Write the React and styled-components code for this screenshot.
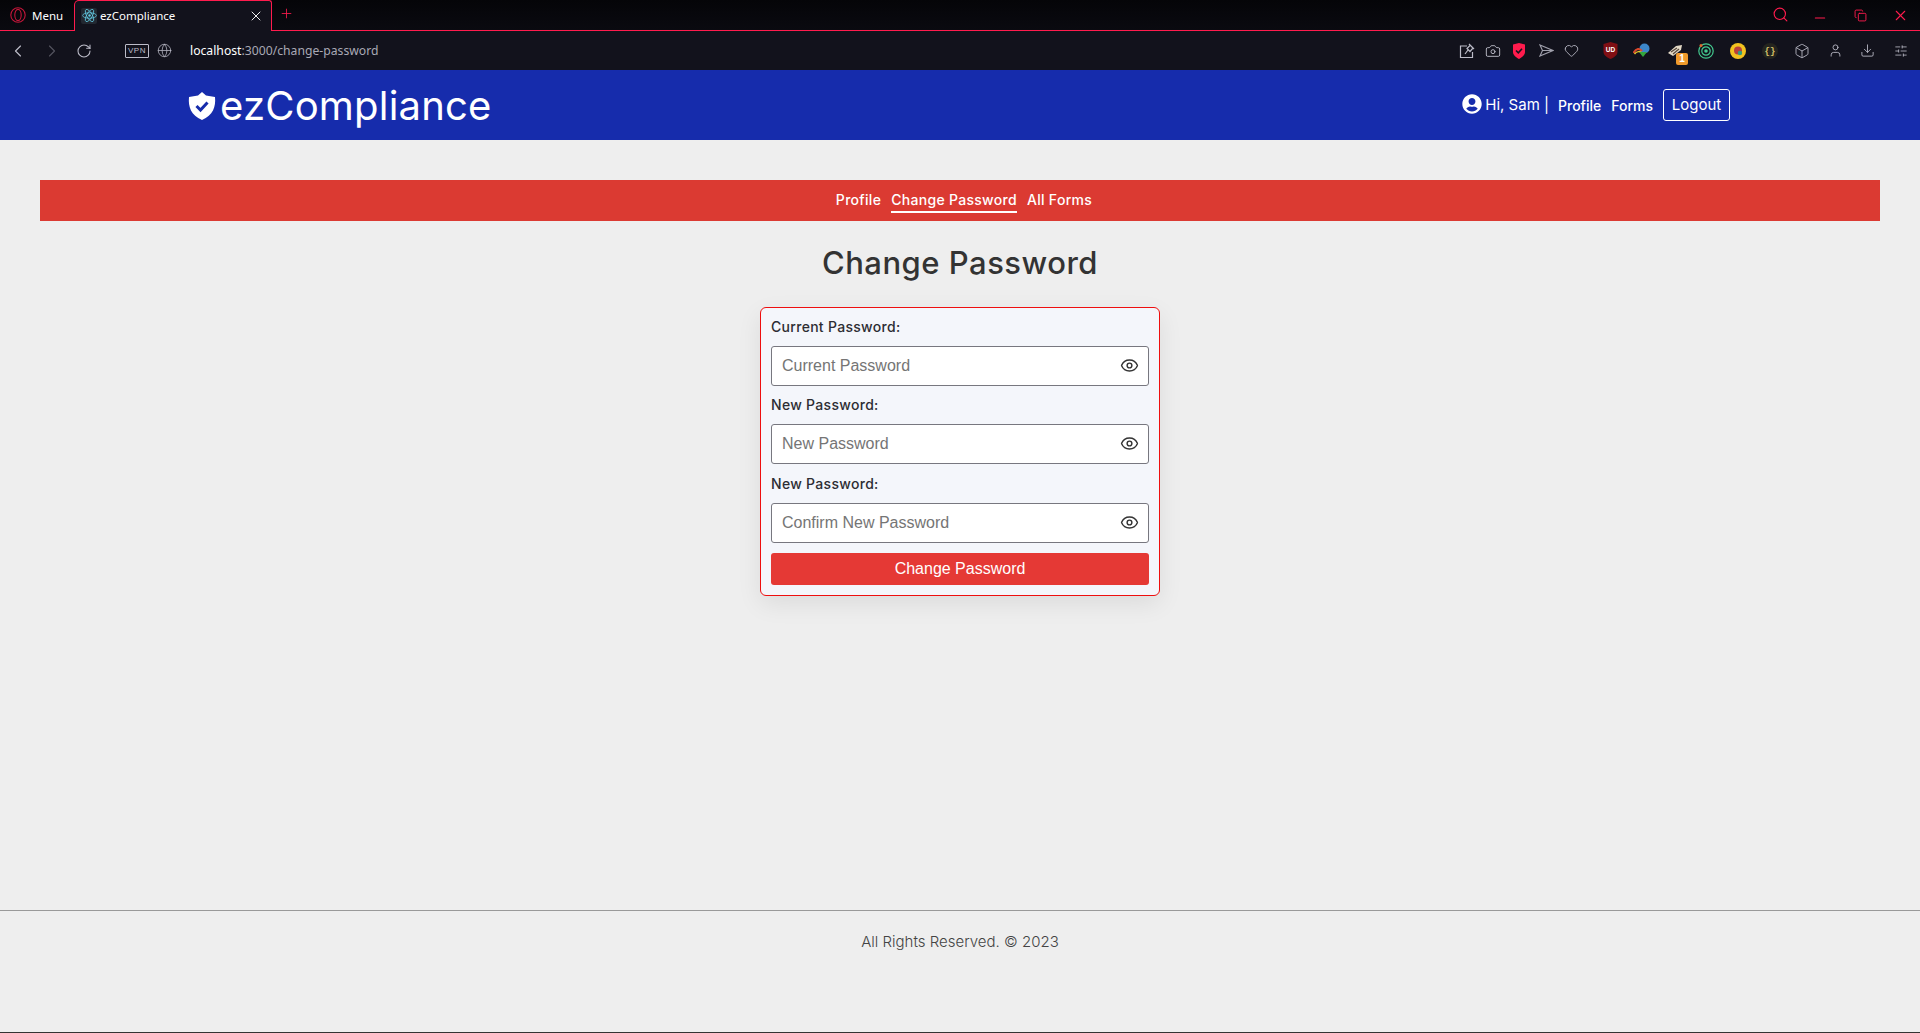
import React from "react";
import styled, { createGlobalStyle } from "styled-components";
import { ChevronLeft, ChevronRight, RotateCw, Globe, Camera, Heart, Box, User, Download, SlidersHorizontal, Search, X, Plus, Eye, Copy, Minus } from "lucide-react";
import { FaUserCircle } from "react-icons/fa";

const poppins = `Inter, "Noto Sans", sans-serif`;
const red = "#ff1b4d";

const GlobalStyle = createGlobalStyle`
  html, body { margin: 0; padding: 0; background: #eeeeee; }
  * { box-sizing: border-box; }
`;

const Page = styled.div`
  height: 1033px;
  display: flex;
  flex-direction: column;
  overflow: hidden;
  background: #eeeeee;
`;

// browser chrome
const TabStrip = styled.div`
  height: 31px;
  flex: none;
  display: flex;
  background: linear-gradient(#050508, #0a0a10);
  border-bottom: 1px solid ${red};
  font-family: "Noto Sans", sans-serif;
  font-size: 11.5px;
`;
const MenuButton = styled.div`
  width: 74px;
  display: flex;
  align-items: center;
  gap: 6px;
  padding-left: 10px;
  color: #fff;
`;
const Tab = styled.div`
  width: 198px;
  height: 31px;
  display: flex;
  align-items: center;
  padding: 0 0 1px 6px;
  color: #fff;
  background: #12121c;
  border: 1px solid ${red};
  border-bottom: none;
  border-radius: 5px 3px 0 0;
`;
const TabIcon = styled.span`
  width: 16px;
  height: 16px;
  margin-right: 3px;
  display: flex;
  align-items: center;
  justify-content: center;
  border-radius: 2px;
  background: #222831;
`;
const TabClose = styled.span`
  margin-left: auto;
  margin-right: 7px;
  display: flex;
  color: #f0f0f0;
`;
const NewTab = styled.span`
  margin: -4px 0 0 7px;
  display: flex;
  align-items: center;
  color: ${red};
`;
const WindowControls = styled.div`
  margin-left: auto;
  display: flex;
  align-items: center;
  padding-right: 10px;
  color: ${red};
`;
const WindowButton = styled.span`
  width: 20px;
  margin-left: ${p => p.$gap}px;
  display: flex;
  justify-content: center;
  margin-top: ${p => p.$down || 0}px;
`;
const Toolbar = styled.div`
  height: 39px;
  flex: none;
  display: flex;
  align-items: center;
  background: #12121c;
  color: #bcbcc8;
  padding-right: 9px;
`;
const NavIcon = styled.span`
  width: 20px;
  margin-left: ${p => p.$gap}px;
  display: flex;
  justify-content: center;
  color: ${p => p.$dim ? "#53535e" : "#bcbcc8"};
`;
const VpnTag = styled.span`
  margin-left: 31px;
  width: 24px;
  height: 14px;
  border: 1px solid #bcbcc8;
  border-radius: 1px;
  font: 8px/12px "Liberation Sans", sans-serif;
  letter-spacing: 0.6px;
  text-align: center;
`;
const AddressBar = styled.div`
  margin: -1px 0 0 16px;
  font: 12.2px "Noto Sans", sans-serif;
  color: #a9a9b5;
`;
const Host = styled.span`
  color: #fff;
`;
const ToolIcons = styled.div`
  margin-left: auto;
  display: flex;
  align-items: center;
`;
const ToolIcon = styled.span`
  position: relative;
  width: 20px;
  height: 20px;
  margin-left: ${p => p.$gap || 0}px;
  display: flex;
  align-items: center;
  justify-content: center;
`;
const Badge = styled.span`
  position: absolute;
  right: -1px;
  bottom: -4px;
  width: 12px;
  height: 12px;
  border-radius: 2px;
  background: #f09a2b;
  color: #fff;
  font: bold 10px/12px "Liberation Sans", sans-serif;
  text-align: center;
`;

// site header
const Navbar = styled.header`
  height: 70px;
  flex: none;
  display: flex;
  align-items: center;
  justify-content: space-between;
  padding: 0 190px 0 187px;
  background: #162cac;
  color: #fff;
  font-family: ${poppins};
`;
const Brand = styled.div`
  display: flex;
  align-items: center;
  gap: 3px;
  font-size: 40px;
  letter-spacing: 0.2px;
  line-height: 1;
  padding-top: 1px;
`;
const NavRight = styled.nav`
  display: flex;
  align-items: center;
`;
const Greeting = styled.span`
  display: flex;
  align-items: center;
  gap: 3px;
  font-size: 15px;
  margin: -2px 9px 0 0;
`;
const NavLink = styled.a`
  font-size: 14px;
  font-weight: 450;
  margin-right: 10px;
  margin-top: 1px;
`;
const LogoutButton = styled.button`
  width: 67px;
  height: 32px;
  padding: 0 0 2px;
  background: transparent;
  border: 1px solid #fff;
  border-radius: 3px;
  color: #fff;
  font: 15px ${poppins};
`;

// page content
const Main = styled.main`
  flex: 1;
  display: flex;
  flex-direction: column;
  align-items: center;
  padding: 40px 40px 0;
`;
const SubNav = styled.div`
  width: 100%;
  height: 41px;
  display: flex;
  justify-content: center;
  gap: 10px;
  padding-left: 8px;
  background: #db3a32;
  font: 450 14px ${poppins};
  letter-spacing: 0.3px;
  color: #fff;
`;
const SubLink = styled.a`
  height: 26px;
  margin-top: 7px;
  line-height: 26px;
  border-bottom: 2px solid ${p => p.$active ? "#fff" : "transparent"};
`;
const Title = styled.h1`
  margin: 23px 0 25px;
  font: 500 31px/38px ${poppins};
  color: #333;
  letter-spacing: 0.5px;
`;
const Card = styled.form`
  width: 400px;
  height: 289px;
  padding: 0 10px;
  background: #f4f6fb;
  border: 1px solid #ee0f0f;
  border-radius: 6px;
  box-shadow: 0 8px 24px rgba(0, 0, 0, 0.08);
`;
const Field = styled.div`
  height: 78.4px;
`;
const Label = styled.label`
  display: block;
  height: 38px;
  font: 450 14px/38px ${poppins};
  letter-spacing: 0.3px;
  color: #2d2d33;
`;
const InputWrap = styled.div`
  position: relative;
  height: 40px;
`;
const Input = styled.input`
  width: 100%;
  height: 100%;
  padding: 0 40px 0 10px;
  background: #fff;
  border: 1px solid #77777f;
  border-radius: 3px;
  font: 16px "Liberation Sans", Arial, sans-serif;
  outline: none;
  &::placeholder { color: #757575; opacity: 1; }
`;
const EyeButton = styled.span`
  position: absolute;
  right: 10px;
  top: 10px;
  display: flex;
  color: #333;
`;
const SubmitButton = styled.button`
  width: 100%;
  height: 32px;
  margin-top: 10px;
  background: #e53935;
  border: none;
  border-radius: 3px;
  color: #fff;
  font: 16px "Liberation Sans", Arial, sans-serif;
`;
const Footer = styled.footer`
  height: 123px;
  flex: none;
  padding-top: 21px;
  border-top: 1px solid #999;
  border-bottom: 1px solid #333;
  text-align: center;
  font: 300 15px/20px ${poppins};
  color: #444;
`;

const OperaLogo = () => (
  <svg width="16" height="16" viewBox="0 0 16 16" fill="none" stroke="#c4163a">
    <circle cx="8" cy="8" r="7.2" strokeWidth="1.1" />
    <ellipse cx="8" cy="8" rx="3.2" ry="5.6" strokeWidth="1.1" />
  </svg>
);

const ReactLogo = () => (
  <svg width="15" height="15" viewBox="-12 -12 24 24" fill="none" stroke="#61c8e0" strokeWidth="1.3">
    <circle r="2" fill="#61c8e0" stroke="none" />
    <ellipse rx="11" ry="4.4" />
    <ellipse rx="11" ry="4.4" transform="rotate(60)" />
    <ellipse rx="11" ry="4.4" transform="rotate(120)" />
  </svg>
);

const ShieldCheck = () => (
  <svg width="30" height="30" viewBox="0 0 30 30">
    <path d="M15 1 L19 4.5 L28 6 C29 16 26 24 15 29 C4 24 1 16 2 6 L11 4.5 Z" fill="#fff" />
    <path d="M9.5 15 L13.5 19 L20.5 11.5" fill="none" stroke="#162cac" strokeWidth="3" />
  </svg>
);

const ShareIcon = () => (
  <svg width="16" height="16" viewBox="0 0 16 16" fill="none" stroke="#bcbcc8" strokeWidth="1.2">
    <path d="M8 3H1.5V14.5H13.5V9" />
    <path d="M10 1 L15 6 M11.5 2 L8 5.5 L11 8.5 L14 5 M6 11 L9 7" />
  </svg>
);
const ShieldBadge = () => (
  <svg width="14" height="16" viewBox="0 0 14 16">
    <path d="M1 1.5 L7 0 L13 1.5 V9 C13 12.5 9.5 14.5 7 16 C4.5 14.5 1 12.5 1 9 Z" fill={red} />
    <path d="M4 7.5 L6.3 9.8 L10 5.8" fill="none" stroke="#12121c" strokeWidth="1.6" />
  </svg>
);
const SendIcon = () => (
  <svg width="15" height="13" viewBox="0 0 15 13" fill="none" stroke="#a0a0ac" strokeWidth="1.1">
    <path d="M1 1 L14 6.5 L1 12 L3.5 6.5 Z M3.5 6.5 H14" />
  </svg>
);
const UblockIcon = () => (
  <svg width="15" height="17" viewBox="0 0 15 17">
    <path d="M0.5 2 L7.5 0 L14.5 2 V10 C14.5 13 11 15.5 7.5 17 C4 15.5 0.5 13 0.5 10 Z" fill="#800f14" />
    <text x="7.5" y="10" textAnchor="middle" fontSize="6.5" fontWeight="700" fontFamily="Liberation Sans" fill="#fff">UD</text>
  </svg>
);
const IdmIcon = () => (
  <svg width="18" height="15" viewBox="0 0 18 15">
    <circle cx="11.5" cy="5.5" r="5" fill="#3c86c9" />
    <path d="M0.5 10 C3 5 7 5 9 8" fill="none" stroke="#d9482c" strokeWidth="2" />
    <path d="M1.5 11 C4 8 7 8 9 10" fill="none" stroke="#e6c12c" strokeWidth="1.5" />
    <path d="M6 9 H14 L10 14 Z" fill="#35a63c" />
  </svg>
);
const ScraperIcon = () => (
  <svg width="16" height="13" viewBox="0 0 16 13" style={{ marginLeft: -5 }}>
    <path d="M1 9 L9 2 L15 1 L14 6 L6 12 Z" fill="#e2d8c5" />
    <path d="M4 8 L10 4 M6 10 L12 5" stroke="#55463a" strokeWidth="1.2" />
  </svg>
);
const RadarIcon = () => (
  <svg width="16" height="16" viewBox="0 0 16 16" fill="none" stroke="#43c98f">
    <circle cx="8" cy="8" r="7.2" strokeWidth="1.2" />
    <circle cx="8" cy="8" r="4.2" strokeWidth="1.2" />
    <circle cx="8" cy="8" r="1.8" fill="#43c98f" stroke="none" />
    <circle cx="3" cy="2.5" r="1.5" fill="#e0672c" stroke="none" />
  </svg>
);
const BugIcon = () => (
  <svg width="16" height="16" viewBox="0 0 16 16">
    <circle cx="8" cy="8" r="8" fill="#f2c21f" />
    <circle cx="8" cy="7.5" r="4" fill="#b8403c" />
    <circle cx="10" cy="10" r="2.2" fill="#2f9f83" />
  </svg>
);
const BracesIcon = () => (
  <svg width="16" height="16" viewBox="0 0 16 16">
    <circle cx="8" cy="8" r="8" fill="#24241f" />
    <text x="8" y="11" textAnchor="middle" fontSize="9" fontWeight="700" fontFamily="Liberation Mono" fill="#d9c26a">{"{}"}</text>
  </svg>
);

const fields = [
  { label: "Current Password:", placeholder: "Current Password" },
  { label: "New Password:", placeholder: "New Password" },
  { label: "New Password:", placeholder: "Confirm New Password" },
];

export default function App() {
  return (
    <Page>
      <GlobalStyle />
      <TabStrip>
        <MenuButton><OperaLogo />Menu</MenuButton>
        <Tab>
          <TabIcon><ReactLogo /></TabIcon>
          ezCompliance
          <TabClose><X size={16} strokeWidth={1.5} /></TabClose>
        </Tab>
        <NewTab><Plus size={15} strokeWidth={1.3} /></NewTab>
        <WindowControls>
          <WindowButton $gap={0} $down={-2}><Search size={17} strokeWidth={1.6} /></WindowButton>
          <WindowButton $gap={20} $down={6}><Minus size={16} strokeWidth={1.6} /></WindowButton>
          <WindowButton $gap={20}><Copy size={13} strokeWidth={1.7} /></WindowButton>
          <WindowButton $gap={20}><X size={17} strokeWidth={1.5} /></WindowButton>
        </WindowControls>
      </TabStrip>
      <Toolbar>
        <NavIcon $gap={8}><ChevronLeft size={20} strokeWidth={1.4} /></NavIcon>
        <NavIcon $gap={14} $dim><ChevronRight size={20} strokeWidth={1.4} /></NavIcon>
        <NavIcon $gap={12}><RotateCw size={16} strokeWidth={1.6} /></NavIcon>
        <VpnTag>VPN</VpnTag>
        <NavIcon $gap={5}><Globe size={15} strokeWidth={1.2} /></NavIcon>
        <AddressBar><Host>localhost</Host>:3000/change-password</AddressBar>
        <ToolIcons>
          <ToolIcon><ShareIcon /></ToolIcon>
          <ToolIcon $gap={6}><Camera size={16} strokeWidth={1.4} /></ToolIcon>
          <ToolIcon $gap={6}><ShieldBadge /></ToolIcon>
          <ToolIcon $gap={7}><SendIcon /></ToolIcon>
          <ToolIcon $gap={5}><Heart size={15} strokeWidth={1.4} /></ToolIcon>
          <ToolIcon $gap={19}><UblockIcon /></ToolIcon>
          <ToolIcon $gap={12}><IdmIcon /></ToolIcon>
          <ToolIcon $gap={15}><ScraperIcon /><Badge>1</Badge></ToolIcon>
          <ToolIcon $gap={9}><RadarIcon /></ToolIcon>
          <ToolIcon $gap={12}><BugIcon /></ToolIcon>
          <ToolIcon $gap={12}><BracesIcon /></ToolIcon>
          <ToolIcon $gap={12}><Box size={16} strokeWidth={1.3} /></ToolIcon>
          <ToolIcon $gap={13}><User size={15} strokeWidth={1.4} /></ToolIcon>
          <ToolIcon $gap={12}><Download size={15} strokeWidth={1.4} /></ToolIcon>
          <ToolIcon $gap={14}><SlidersHorizontal size={14} strokeWidth={1.4} /></ToolIcon>
        </ToolIcons>
      </Toolbar>
      <Navbar>
        <Brand><ShieldCheck />ezCompliance</Brand>
        <NavRight>
          <Greeting><FaUserCircle size={20} />Hi, Sam |</Greeting>
          <NavLink>Profile</NavLink>
          <NavLink>Forms</NavLink>
          <LogoutButton type="button">Logout</LogoutButton>
        </NavRight>
      </Navbar>
      <Main>
        <SubNav>
          <SubLink>Profile</SubLink>
          <SubLink $active>Change Password</SubLink>
          <SubLink>All Forms</SubLink>
        </SubNav>
        <Title>Change Password</Title>
        <Card>
          {fields.map((f) => (
            <Field key={f.placeholder}>
              <Label>{f.label}</Label>
              <InputWrap>
                <Input type="password" placeholder={f.placeholder} />
                <EyeButton><Eye size={19} strokeWidth={1.8} /></EyeButton>
              </InputWrap>
            </Field>
          ))}
          <SubmitButton type="button">Change Password</SubmitButton>
        </Card>
      </Main>
      <Footer>All Rights Reserved. © 2023</Footer>
    </Page>
  );
}
